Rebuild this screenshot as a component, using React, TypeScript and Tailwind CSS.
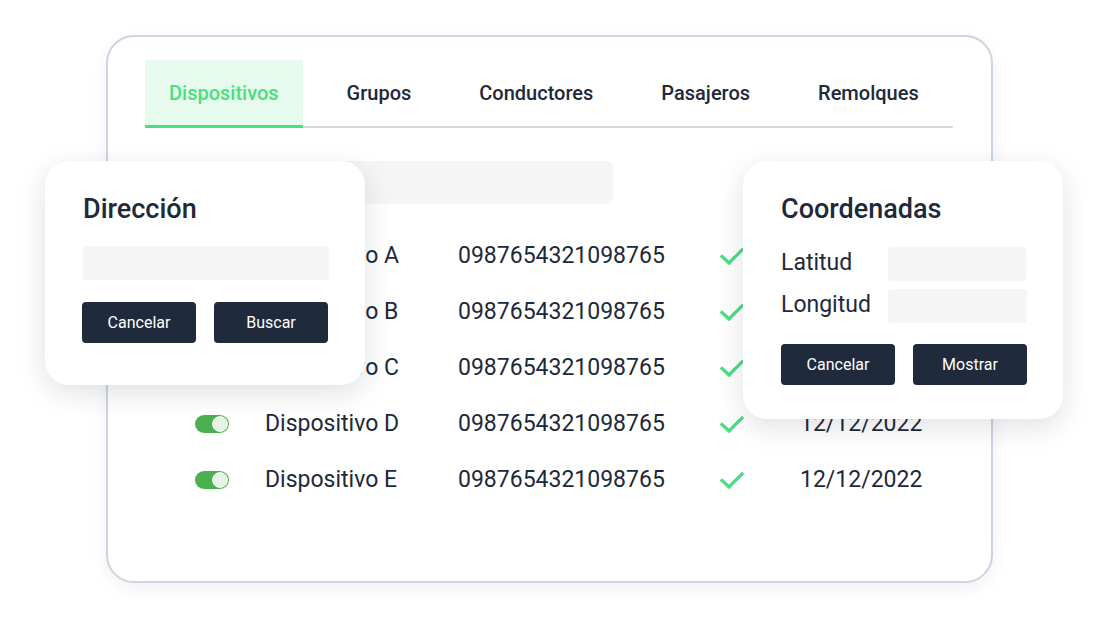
import React from 'react';

const tabs = ['Dispositivos', 'Grupos', 'Conductores', 'Pasajeros', 'Remolques'];
const devices = ['A', 'B', 'C', 'D', 'E'];

function Toggle() {
  return (
    <div className="flex h-[18px] w-[34px] items-center justify-end rounded-full bg-[#4caf50] pr-[1px]">
      <div className="h-[16px] w-[16px] rounded-full border border-[#f4fbf4] bg-[#e6f4e7]" />
    </div>
  );
}

function Check() {
  return (
    <svg width="24" height="17" viewBox="0 0 24 17" fill="none">
      <path d="M2 8.5l7 6.5L22 2" stroke="#4ade80" strokeWidth="3.2" strokeLinecap="square" />
    </svg>
  );
}

function DarkButton({ label }: { label: string }) {
  return (
    <button className="flex h-[41px] w-[114px] items-center justify-center rounded-[4px] bg-[#1f2a3c] pt-[1px] text-[16px] text-white">
      {label}
    </button>
  );
}

export default function App() {
  return (
    <div
      className="relative h-[630px] w-[1096px] overflow-hidden bg-white pl-[106px] pt-[35px] text-[#1e293b]"
      style={{ fontFamily: 'Roboto, "Noto Sans", sans-serif' }}
    >
      {/* Main card */}
      <div className="h-[548px] w-[887px] rounded-[28px] border-2 border-[#cbd5e1] bg-white pl-[37px] pr-[38px] pt-[23px] shadow-[0_6px_18px_rgba(15,23,42,0.06)]">
        <div className="flex h-[68px] gap-5 border-b-2 border-[#d6dbe2]">
          {tabs.map((t, i) =>
            i === 0 ? (
              <div
                key={t}
                className="-mb-[2px] flex items-center border-b-[3px] border-[#4ade80] bg-[#e6faed] px-6 pt-[1px] text-[20px] font-medium text-[#4ade80]"
              >
                {t}
              </div>
            ) : (
              <div key={t} className="flex items-center px-6 text-[20px] font-medium text-[#1e293b]">
                {t}
              </div>
            )
          )}
        </div>

        <div className="mt-[33px] h-[43px] w-[468px] rounded-md bg-[#f5f5f5]" />

        <div className="mt-[23px] pl-[50px]">
          {devices.map((d) => (
            <div key={d} className="grid h-[56px] grid-cols-[70px_193px_262px_80px_1fr] items-center pt-[2px] text-[23px]">
              <Toggle />
              <div>Dispositivo {d}</div>
              <div>0987654321098765</div>
              <div className="flex items-center">
                <Check />
              </div>
              <div>12/12/2022</div>
            </div>
          ))}
        </div>
      </div>

      {/* Dirección popup */}
      <div className="absolute left-[45px] top-[161px] h-[224px] w-[320px] rounded-[24px] bg-white pl-[38px] pr-[36px] pt-[32px] shadow-[0_8px_28px_rgba(15,23,42,0.13)]">
        <div className="text-[27px] font-medium leading-[32px]">Dirección</div>
        <div className="mt-[21px] h-[34px] w-[246px] rounded-[4px] bg-[#f5f5f5]" />
        <div className="-ml-[1px] mt-[22px] flex gap-[18px]">
          <DarkButton label="Cancelar" />
          <DarkButton label="Buscar" />
        </div>
      </div>

      {/* Coordenadas popup */}
      <div className="absolute left-[743px] top-[161px] h-[258px] w-[320px] rounded-[24px] bg-white pl-[38px] pr-[36px] pt-[32px] shadow-[0_8px_28px_rgba(15,23,42,0.13)]">
        <div className="text-[27px] font-medium leading-[32px]">Coordenadas</div>
        <div className="mt-[21px] flex flex-col gap-2">
          <div className="flex h-[34px] items-center justify-between pt-[1px] text-[23px]">
            <span>Latitud</span>
            <div className="h-[34px] w-[139px] rounded-[4px] bg-[#f5f5f5]" />
          </div>
          <div className="flex h-[34px] items-center justify-between pt-[1px] text-[23px]">
            <span>Longitud</span>
            <div className="h-[34px] w-[139px] rounded-[4px] bg-[#f5f5f5]" />
          </div>
        </div>
        <div className="mt-[22px] flex gap-[18px]">
          <DarkButton label="Cancelar" />
          <DarkButton label="Mostrar" />
        </div>
      </div>
    </div>
  );
}
